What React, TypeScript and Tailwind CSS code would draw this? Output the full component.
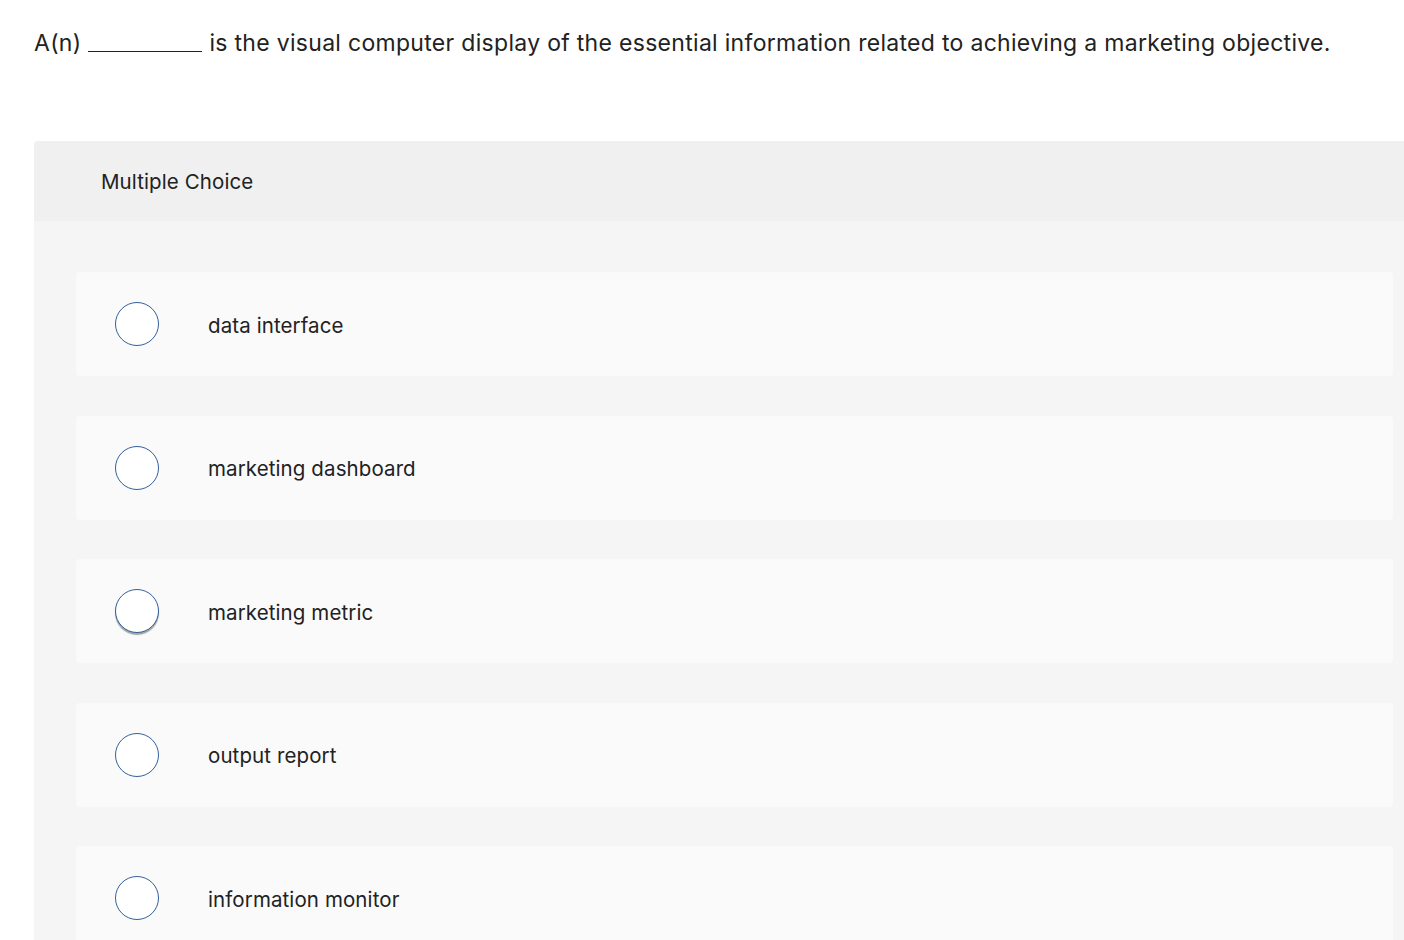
import React from "react";

const options = [
  "data interface",
  "marketing dashboard",
  "marketing metric",
  "output report",
  "information monitor",
];

export default function App() {
  return (
    <div
      className="w-[1404px] h-[940px] overflow-hidden bg-white text-[#222222]"
      style={{ fontFamily: '"Inter", "Open Sans", sans-serif' }}
    >
      <div className="pl-[34px] pt-[28px] h-[141px]">
        <p className="text-[23px] leading-[30px] tracking-[0.3px] whitespace-nowrap">
          A(n)<span className="inline-block ml-[7px] mr-[7px] w-[114px] border-b-[1.5px] border-[#222] align-baseline translate-y-[1px]"></span>is the visual computer display of the essential information related to achieving a marketing objective.
        </p>
      </div>
      <div className="ml-[34px] rounded-tl-[4px] bg-[#f5f5f5] h-[799px]">
        <div className="h-[80px] bg-[#f0f0f0] rounded-tl-[4px] flex items-center pl-[67px] pt-[2px]">
          <span className="text-[20.5px] tracking-[0.1px]">Multiple Choice</span>
        </div>
        <div className="pl-[42px] pr-[11px] pt-[51px] flex flex-col gap-[39.5px]">
          {options.map((o, i) => (
            <div
              key={o}
              className="h-[104px] rounded-[4px] bg-[#fafafa] flex items-center pl-[39px]"
            >
              <div
                className={
                  "w-[44px] h-[44px] rounded-full bg-white border-[1.5px] border-[#34609a] shrink-0" +
                  (i === 2 ? " shadow-[0_2px_1px_rgba(0,0,0,0.35)]" : "")
                }
              />
              <span className="ml-[49px] pt-[4px] text-[20.5px] tracking-[0.1px]">{o}</span>
            </div>
          ))}
        </div>
      </div>
    </div>
  );
}
